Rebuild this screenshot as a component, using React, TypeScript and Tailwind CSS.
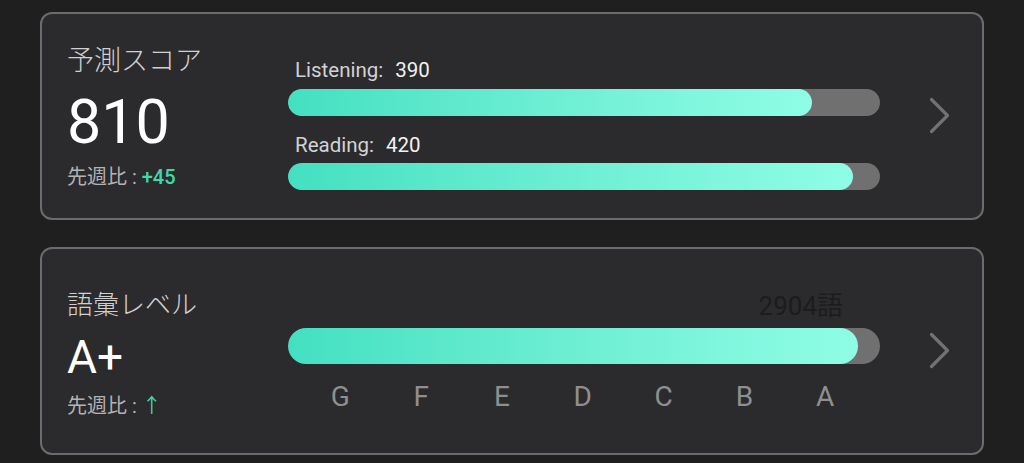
import React from 'react';

const FONT = { fontFamily: 'Roboto, "Noto Sans CJK JP", sans-serif' };

const Chevron = () => (
    <svg width="21" height="37" viewBox="0 0 21 37" className="shrink-0">
        <polyline points="2.5,2.5 18.5,18.5 2.5,34.5" fill="none" stroke="#727272" strokeWidth="3.2" strokeLinecap="round" strokeLinejoin="round" />
    </svg>
);

const Bar = ({ pct, height }: { pct: number; height: string }) => (
    <div className={`w-full ${height} rounded-full bg-[#707070] overflow-hidden`}>
        <div
            className="h-full rounded-full bg-gradient-to-r from-[#42e0c1] to-[#8ffde6]"
            style={{ width: `${pct}%` }}
        />
    </div>
);

const levels = ['G', 'F', 'E', 'D', 'C', 'B', 'A'];

export default function App() {
    return (
        <div className="min-h-screen bg-[#1f1f20] px-[40px] pt-[12px] pb-[10px]" style={FONT}>
            {/* Score card */}
            <div className="h-[208px] rounded-[12px] border-2 border-[#6c6c6e] bg-[#2b2a2d] flex items-start pl-[25px]">
                <div className="w-[221px] mt-[32px] flex flex-col">
                    <div className="text-[27px] leading-[31px] font-light text-[#d0d0d0]">予測スコア</div>
                    <div className="mt-[14px] text-[61px] leading-[62px] text-white">810</div>
                    <div className="mt-[12px] text-[20px] leading-[24px] text-[#b3b3b3]">
                        先週比 : <span className="font-medium text-[#3fd9a9]">+45</span>
                    </div>
                </div>
                <div className="w-[592px] mt-[44px] flex flex-col">
                    <div className="pl-[7px] flex text-[20.5px] leading-[24px] text-[#d2d2d2]">
                        <span>Listening:</span>
                        <span className="ml-[12px] text-[#f2f2f2]">390</span>
                    </div>
                    <div className="mt-[7px]">
                        <Bar pct={88.5} height="h-[27px]" />
                    </div>
                    <div className="mt-[17px] pl-[7px] flex text-[20.5px] leading-[24px] text-[#d2d2d2]">
                        <span>Reading:</span>
                        <span className="ml-[12px] text-[#f2f2f2]">420</span>
                    </div>
                    <div className="mt-[6px]">
                        <Bar pct={95.4} height="h-[27px]" />
                    </div>
                </div>
                <div className="ml-[49px] mt-[83px]">
                    <Chevron />
                </div>
            </div>

            {/* Vocabulary card */}
            <div className="mt-[27px] h-[208px] rounded-[12px] border-2 border-[#6c6c6e] bg-[#2b2a2d] flex items-start pl-[25px]">
                <div className="w-[221px] mt-[41px] flex flex-col">
                    <div className="text-[26px] leading-[31px] font-light text-[#d0d0d0]">語彙レベル</div>
                    <div className="mt-[13px] text-[46px] leading-[46px] text-white">A+</div>
                    <div className="mt-[14px] text-[20px] leading-[24px] text-[#b3b3b3]">
                        先週比 : <span className="text-[#3fd9a9]">↑</span>
                    </div>
                </div>
                <div className="w-[592px] mt-[42px] flex flex-col">
                    <div className="flex justify-end pr-[37px] text-[26px] leading-[30px] text-[#1c1c1d]">2904語</div>
                    <div className="mt-[7px]">
                        <Bar pct={96.2} height="h-[36px]" />
                    </div>
                    <div className="mt-[17px] ml-[12px] flex text-[28px] leading-[32px] text-[#8f8f8f]">
                        {levels.map(l => (
                            <div key={l} className="w-[80.8px] text-center">{l}</div>
                        ))}
                    </div>
                </div>
                <div className="ml-[49px] mt-[83px]">
                    <Chevron />
                </div>
            </div>
        </div>
    );
}
